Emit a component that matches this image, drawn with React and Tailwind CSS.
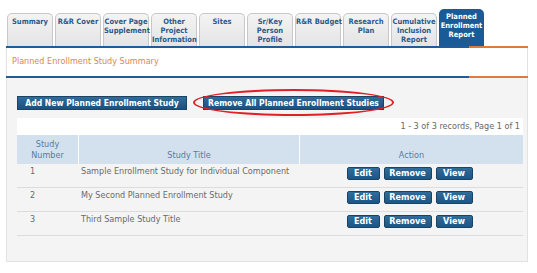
import React from "react";

const tabs = [
  ["Summary"],
  ["R&R Cover"],
  ["Cover Page", "Supplement"],
  ["Other", "Project", "Information"],
  ["Sites"],
  ["Sr/Key", "Person", "Profile"],
  ["R&R Budget"],
  ["Research", "Plan"],
  ["Cumulative", "Inclusion", "Report"],
];

const studies = [
  { id: 1, title: "Sample Enrollment Study for Individual Component" },
  { id: 2, title: "My Second Planned Enrollment Study" },
  { id: 3, title: "Third Sample Study Title" },
];

function SmallBtn({ children, w }) {
  return (
    <button
      className={`${w} h-[13px] rounded-[2px] border border-[#1a4466] bg-gradient-to-b from-[#2f6c9c] to-[#1f5583] text-white text-[9px] font-bold leading-[11px]`}
    >
      {children}
    </button>
  );
}

export default function App() {
  return (
    <div
      className="w-[537px] h-[273px] bg-white overflow-hidden"
      style={{ fontFamily: '"DejaVu Sans Condensed", "DejaVu Sans", Tahoma, sans-serif' }}
    >
      {/* Tabs */}
      <div className="flex items-end gap-[2px] pl-[7px] pt-[9px] h-[46px]">
        {tabs.map((t, i) => (
          <div
            key={i}
            className="w-[46px] h-[33px] rounded-t-[5px] border border-b-0 border-[#c8c8c8] bg-gradient-to-b from-[#f4f4f4] to-[#e4e4e4] text-[#2b5a8a] text-[7.5px] font-bold leading-[9px] text-center pt-[3px] whitespace-nowrap"
          >
            {t.map((l) => (
              <div key={l}>{l}</div>
            ))}
          </div>
        ))}
        <div className="w-[45px] h-[37px] rounded-t-[5px] bg-[#1a5b97] text-white text-[7.5px] font-bold leading-[9px] text-center pt-[3px] whitespace-nowrap">
          <div>Planned</div>
          <div>Enrollment</div>
          <div>Report</div>
        </div>
      </div>

      {/* Panel */}
      <div className="ml-[6px] w-[522px]">
        <div className="flex h-[2px]">
          <div className="w-[463px] bg-[#1f5c99]" />
          <div className="flex-1 bg-[#e07a3c]" />
        </div>
        <div className="h-[28px] bg-white border-x border-[#e2e2e2] flex items-center pl-[5px] text-[9px] text-[#e2844f]">
          Planned Enrollment Study Summary
        </div>
        <div className="flex h-[2px]">
          <div className="w-[463px] bg-[#1f5c99]" />
          <div className="flex-1 bg-[#e07a3c]" />
        </div>

        <div className="h-[184px] bg-[#f4f4f4] border-x border-b border-[#e2e2e2] px-[10px] pt-[18px]">
          <div className="flex items-start gap-[16px] h-[14px]">
            <button className="block w-[170px] h-[14px] border border-[#1a4466] bg-gradient-to-b from-[#2f6c9c] to-[#1c507e] text-white text-[8.5px] font-bold leading-[12px]">
              Add New Planned Enrollment Study
            </button>
            <div className="relative flex">
              <button className="block w-[181px] h-[14px] border border-[#1a4466] bg-gradient-to-b from-[#2f6c9c] to-[#1c507e] text-white text-[8.5px] font-bold leading-[12px]">
                Remove All Planned Enrollment Studies
              </button>
              <span className="absolute -left-[10px] -right-[10px] -top-[7px] -bottom-[6px] rounded-[50%] border-2 border-[#e21e26] pointer-events-none" />
            </div>
          </div>

          <div className="mt-[8px] w-[506px]">
            <div className="h-[17px] bg-white text-right pr-[3px] text-[9px] leading-[17px] text-[#666]">
              1 - 3 of 3 records, Page 1 of 1
            </div>
            <div className="flex h-[29px] bg-[#d3e1ef] text-[9px] leading-[11px] text-[#5b7a99]">
              <div className="w-[62px] border-r border-white flex flex-col items-center justify-end pb-[3px]">
                <div>Study</div>
                <div>Number</div>
              </div>
              <div className="w-[221px] border-r border-white flex items-end justify-center pb-[3px]">
                Study Title
              </div>
              <div className="flex-1 flex items-end justify-center pb-[3px]">Action</div>
            </div>
            {studies.map((s) => (
              <div
                key={s.id}
                className="flex h-[24px] border-b border-[#dcdcdc] text-[9px] leading-[11px] text-[#6a6a6a]"
              >
                <div className="w-[62px] pl-[13px] pt-[2px]">{s.id}</div>
                <div className="w-[221px] pl-[2px] pt-[2px]">{s.title}</div>
                <div className="flex-1 flex items-start justify-center gap-[4px] pt-[3px] pr-[4px]">
                  <SmallBtn w="w-[33px]">Edit</SmallBtn>
                  <SmallBtn w="w-[48px]">Remove</SmallBtn>
                  <SmallBtn w="w-[37px]">View</SmallBtn>
                </div>
              </div>
            ))}
          </div>
        </div>
      </div>
    </div>
  );
}
